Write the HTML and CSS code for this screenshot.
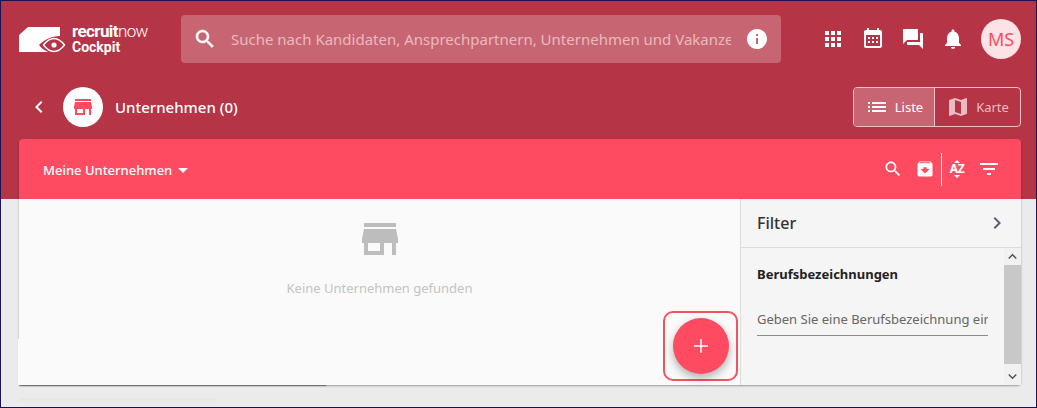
FILE: index.html
```html
<!DOCTYPE html>
<html lang="de">
<head>
    <meta charset="UTF-8">
    <title>Unternehmen</title>
    <link rel="stylesheet" href="styles.css">
</head>
<body>
<div class="frame">

    <header class="topbar">
        <div class="logo">
            <svg class="logoMark" width="47" height="26" viewBox="0 0 47 26">
                <path fill="#fff" d="M0 8 L9 0 H41 V9 C32 9 25 13 20 18 C22 21 25 23 29 25 H0 Z"/>
                <path fill="none" stroke="#fff" stroke-width="1.400" d="M24.500 18 C28 13.500 31.500 11.500 35 11.500 C38.500 11.500 42 13.500 45.500 18 C42 22.500 38.500 24.500 35 24.500 C31.500 24.500 28 22.500 24.500 18 Z"/>
                <circle cx="35" cy="18" r="2.600" fill="#fff"/>
            </svg>
            <div class="logoText">
                <div class="logoName"><b>recruit</b>now</div>
                <div class="logoSub">Cockpit</div>
            </div>
        </div>

        <div class="searchBox">
            <svg class="searchIcon" width="24" height="24" viewBox="0 0 24 24"><path d="M15.500 14h-.79l-.28-.27C15.410 12.590 16 11.110 16 9.500 16 5.910 13.090 3 9.500 3S3 5.910 3 9.500 5.910 16 9.500 16c1.610 0 3.090-.59 4.230-1.570l.27.28v.79l5 4.990L20.490 19l-4.990-5zm-6 0C7.010 14 5 11.990 5 9.500S7.010 5 9.500 5 14 7.010 14 9.500 11.990 14 9.500 14z"/></svg>
            <span class="searchText">Suche nach Kandidaten, Ansprechpartnern, Unternehmen und Vakanzen</span>
            <svg class="infoIcon" width="24" height="24" viewBox="0 0 24 24"><path d="M12 2C6.480 2 2 6.480 2 12s4.480 10 10 10 10-4.480 10-10S17.520 2 12 2zm1 15h-2v-6h2v6zm0-8h-2V7h2v2z"/></svg>
        </div>

        <nav class="topIcons">
            <svg width="24" height="24" viewBox="0 0 24 24"><path d="M4 8h4V4H4v4zm6 12h4v-4h-4v4zm-6 0h4v-4H4v4zm0-6h4v-4H4v4zm6 0h4v-4h-4v4zm6-10v4h4V4h-4zm-6 4h4V4h-4v4zm6 6h4v-4h-4v4zm0 6h4v-4h-4v4z"/></svg>
            <svg width="24" height="24" viewBox="0 0 24 24"><path d="M19 3h-1V1h-2v2H8V1H6v2H5c-1.110 0-1.990.9-1.990 2L3 19c0 1.100.89 2 2 2h14c1.100 0 2-.9 2-2V5c0-1.100-.9-2-2-2zm0 16H5V8h14v11z"/><path d="M7 10h2v2H7zM11 10h2v2h-2zM15 10h2v2h-2zM7 14h2v2H7zM11 14h2v2h-2zM15 14h2v2h-2z"/></svg>
            <svg width="24" height="24" viewBox="0 0 24 24"><path d="M21 6h-2v9H6v2c0 .55.45 1 1 1h11l4 4V7c0-.55-.45-1-1-1zm-4 6V3c0-.55-.45-1-1-1H3c-.55 0-1 .45-1 1v14l4-4h10c.55 0 1-.45 1-1z"/></svg>
            <svg width="24" height="24" viewBox="0 0 24 24"><path d="M12 22c1.100 0 2-.9 2-2h-4c0 1.100.9 2 2 2zm6-6v-5c0-3.070-1.630-5.640-4.500-6.320V4c0-.83-.67-1.500-1.500-1.500s-1.500.67-1.500 1.500v.68C7.640 5.360 6 7.920 6 11v5l-2 2v1h16v-1l-2-2z"/></svg>
        </nav>
        <div class="avatar">MS</div>
    </header>

    <div class="subbar">
        <svg class="backIcon" width="24" height="24" viewBox="0 0 24 24"><path d="M15.410 7.410L14 6l-6 6 6 6 1.410-1.410L10.830 12z"/></svg>
        <div class="pageBadge">
            <svg width="24" height="24" viewBox="0 0 24 24"><path d="M20 4H4v2h16V4zm1 10v-2l-1-5H4l-1 5v2h1v6h10v-6h4v6h2v-6h1zm-9 4H6v-4h6v4z"/></svg>
        </div>
        <h1 class="pageTitle">Unternehmen (0)</h1>
        <div class="viewToggle">
            <div class="viewBtn viewBtnActive">
                <svg width="24" height="24" viewBox="0 0 24 24"><path d="M3 13h2v-2H3v2zm0 4h2v-2H3v2zm0-8h2V7H3v2zm4 4h14v-2H7v2zm0 4h14v-2H7v2zM7 7v2h14V7H7z"/></svg>
                Liste
            </div>
            <div class="viewBtn">
                <svg width="24" height="24" viewBox="0 0 24 24"><path d="M20.500 3l-.16.03L15 5.100 9 3 3.360 4.900c-.21.07-.36.25-.36.48V20.500c0 .28.22.5.5.5l.16-.03L9 18.900l6 2.100 5.640-1.900c.21-.07.36-.25.36-.48V3.500c0-.28-.22-.5-.5-.5zM15 19l-6-2.110V5l6 2.110V19z"/></svg>
                Karte
            </div>
        </div>
    </div>

    <main class="card">
        <div class="toolbar">
            <div class="listPicker">Meine Unternehmen <span class="caret"></span></div>
            <div class="toolIcons">
                <svg width="20" height="20" viewBox="0 0 24 24"><path d="M15.500 14h-.79l-.28-.27C15.410 12.590 16 11.110 16 9.500 16 5.910 13.090 3 9.500 3S3 5.910 3 9.500 5.910 16 9.500 16c1.610 0 3.090-.59 4.230-1.570l.27.28v.79l5 4.990L20.490 19l-4.990-5zm-6 0C7.010 14 5 11.990 5 9.500S7.010 5 9.500 5 14 7.010 14 9.500 11.990 14 9.500 14z"/></svg>
                <svg width="20" height="20" viewBox="0 0 24 24"><path d="M20.540 5.230l-1.390-1.680C18.880 3.210 18.470 3 18 3H6c-.47 0-.88.21-1.160.55L3.460 5.230C3.170 5.570 3 6.020 3 6.500V19c0 1.100.9 2 2 2h14c1.100 0 2-.9 2-2V6.500c0-.48-.17-.93-.46-1.270zM12 17.500L6.500 12H10v-2h4v2h3.500L12 17.500zM5.120 5l.81-1h12l.94 1H5.120z"/></svg>
                <span class="toolDivider"></span>
                <span class="sortIcon">AZ</span>
                <svg width="24" height="24" viewBox="0 0 24 24"><path d="M10 18h4v-2h-4v2zM3 6v2h18V6H3zm3 7h12v-2H6v2z"/></svg>
            </div>
        </div>

        <div class="cardBody">
            <section class="results">
                <svg class="emptyIcon" width="48" height="48" viewBox="0 0 24 24"><path d="M20 4H4v2h16V4zm1 10v-2l-1-5H4l-1 5v2h1v6h10v-6h4v6h2v-6h1zm-9 4H6v-4h6v4z"/></svg>
                <p class="emptyText">Keine Unternehmen gefunden</p>
                <div class="fabMark">
                    <div class="fab">
                        <svg width="24" height="24" viewBox="0 0 24 24"><path d="M19 12.750h-6.250V19h-1.500v-6.250H5v-1.500h6.250V5h1.500v6.250H19z"/></svg>
                    </div>
                </div>
            </section>

            <aside class="filter">
                <div class="filterHead">
                    Filter
                    <svg width="24" height="24" viewBox="0 0 24 24"><path d="M10 6L8.590 7.410 13.170 12l-4.580 4.590L10 18l6-6z"/></svg>
                </div>
                <div class="filterBody">
                    <div class="filterMain">
                        <h2 class="filterTitle">Berufsbezeichnungen</h2>
                        <div class="filterInput"><span>Geben Sie eine Berufsbezeichnung ein</span></div>
                    </div>
                    <div class="scrollbar">
                        <svg width="17" height="17" viewBox="0 0 24 24"><path d="M12 8l-6 6 1.410 1.410L12 10.830l4.590 4.580L18 14z"/></svg>
                        <div class="scrollThumb"></div>
                        <svg width="17" height="17" viewBox="0 0 24 24"><path d="M16.590 8.590L12 13.170 7.410 8.590 6 10l6 6 6-6z"/></svg>
                    </div>
                </div>
            </aside>
        </div>
        <div class="ghostStrip"></div>
        <div class="ghostShadow"></div>
    </main>
</div>
</body>
</html>
```

FILE: styles.css
```css
html, body {
    margin: 0;
    height: 100%;
    overflow: hidden;
}
body {
    font-family: "Noto Sans", sans-serif;
    color: #333;
}
svg {
    display: block;
    fill: currentColor;
    flex: none;
}
.frame {
    box-sizing: border-box;
    width: 1037px;
    height: 408px;
    border: 1px solid #1a1254;
    background: linear-gradient(#b53446 198px, #ebebeb 198px);
}

/* top bar */
.topbar {
    display: flex;
    align-items: center;
    height: 76px;
    padding: 0 15px 0 18px;
}
.logo {
    display: flex;
    align-items: center;
    width: 162px;
    color: #fff;
}
.logoMark {
    margin-top: 2px;
}
.logoText {
    margin-left: 6px;
}
.logoName {
    font-family: Roboto, sans-serif;
    font-size: 17px;
    font-weight: 300;
    line-height: 16px;
    letter-spacing: -0.6px;
}
.logoName b {
    font-weight: 700;
}
.logoSub {
    font-family: Roboto, sans-serif;
    font-size: 14px;
    font-weight: 700;
    line-height: 16px;
}
.searchBox {
    display: flex;
    align-items: center;
    box-sizing: border-box;
    width: 600px;
    height: 48px;
    padding: 0 12px;
    border-radius: 4px;
    background: #c76672;
    color: #fff;
}
.searchIcon {
    stroke: #fff;
    stroke-width: .5;
}
.searchText {
    width: 500px;
    margin: 0 14px;
    overflow: hidden;
    white-space: nowrap;
    font-size: 15px;
    color: #eab9bf;
}
.topIcons {
    display: flex;
    gap: 16px;
    margin-left: 40px;
    color: #fff;
}
.avatar {
    display: flex;
    align-items: center;
    justify-content: center;
    width: 40px;
    height: 40px;
    margin-left: 16px;
    border-radius: 50%;
    background: #fde3e6;
    color: #ff4b62;
    font-size: 18px;
}

/* page title row */
.subbar {
    display: flex;
    align-items: center;
    height: 40px;
    margin-top: 10px;
    padding: 0 15px 0 26px;
    color: #fff;
}
.pageBadge {
    display: flex;
    align-items: center;
    justify-content: center;
    width: 40px;
    height: 40px;
    margin-left: 12px;
    border-radius: 50%;
    background: #fff;
    color: #ff4b62;
}
.pageTitle {
    margin: 0 0 0 12px;
    font-size: 15px;
    font-weight: 500;
}
.viewToggle {
    display: flex;
    box-sizing: border-box;
    width: 168px;
    height: 40px;
    margin-left: auto;
    border: 1px solid #e6c3c8;
    border-radius: 4px;
    overflow: hidden;
    font-size: 13px;
}
.viewBtn {
    flex: 1;
    display: flex;
    align-items: center;
    justify-content: center;
    gap: 6px;
    color: #e9bcc2;
}
.viewBtnActive {
    flex: none;
    width: 80px;
    border-right: 1px solid #e6c3c8;
    background: #c76672;
    color: #fff;
}

/* card */
.card {
    position: relative;
    width: 1002px;
    margin: 12px 0 0 18px;
    border-radius: 4px;
    box-shadow: 0 1px 2px rgba(0, 0, 0, .35);
}
.toolbar {
    display: flex;
    align-items: center;
    justify-content: space-between;
    height: 60px;
    padding: 0 20px 0 24px;
    border-radius: 4px 4px 0 0;
    background: #ff4b62;
    color: #fff;
}
.listPicker {
    display: flex;
    align-items: center;
    margin-top: 2px;
    font-size: 13px;
    font-weight: 500;
}
.caret {
    margin-left: 6px;
    border: 5px solid transparent;
    border-top-color: #fff;
    border-bottom: 0;
}
.toolIcons {
    display: flex;
    align-items: center;
    gap: 12px;
}
.toolDivider {
    width: 1px;
    height: 33px;
    margin: 0 -1px 0 -6px;
    background: #fff;
}
.sortIcon {
    position: relative;
    width: 20px;
    margin-left: -6px;
    margin-right: -2px;
    font-size: 12px;
    line-height: 12px;
    font-weight: 700;
    text-align: center;
    letter-spacing: -0.5px;
}
.sortIcon::before, .sortIcon::after {
    content: "";
    position: absolute;
    left: 7px;
    border: 3px solid transparent;
}
.sortIcon::before {
    top: -3px;
    border-bottom-color: #fff;
    border-top: 0;
}
.sortIcon::after {
    bottom: -3px;
    border-top-color: #fff;
    border-bottom: 0;
}
.cardBody {
    display: flex;
    height: 186px;
}
.results {
    position: relative;
    flex: 1;
    display: flex;
    flex-direction: column;
    align-items: center;
    padding-top: 16px;
    box-sizing: border-box;
    background: #fafafa;
}
.emptyIcon {
    color: #bdbdbd;
}
.emptyText {
    margin: 16px 0 0;
    font-size: 13px;
    color: #c4c4c4;
}
.fabMark {
    position: absolute;
    left: 644px;
    top: 112px;
    display: flex;
    align-items: center;
    justify-content: center;
    box-sizing: border-box;
    width: 75px;
    height: 70px;
    border: 2px solid #f0545f;
    border-radius: 10px;
}
.fab {
    display: flex;
    align-items: center;
    justify-content: center;
    width: 56px;
    height: 56px;
    border-radius: 50%;
    background: #ff4b62;
    color: #fff;
    box-shadow: 0 4px 8px rgba(0, 0, 0, .3);
}

/* filter panel */
.filter {
    display: flex;
    flex-direction: column;
    width: 281px;
    box-sizing: border-box;
    border-left: 1px solid #dcdcdc;
    background: #f5f5f5;
}
.filterHead {
    display: flex;
    align-items: center;
    justify-content: space-between;
    height: 49px;
    flex: none;
    box-sizing: border-box;
    padding: 0 12px 0 16px;
    border-bottom: 1px solid #dcdcdc;
    font-size: 16px;
    font-weight: 500;
    color: #333;
}
.filterHead svg {
    color: #546478;
}
.filterBody {
    flex: 1;
    display: flex;
    min-height: 0;
}
.filterMain {
    flex: 1;
    padding: 0 16px;
    min-width: 0;
}
.filterTitle {
    margin: 17px 0 0;
    font-size: 13px;
    font-weight: 700;
    color: #222;
}
.filterInput {
    margin-top: 27px;
    padding-bottom: 7px;
    border-bottom: 1px solid #8c8c8c;
    overflow: hidden;
    white-space: nowrap;
    font-size: 13px;
    color: #666;
}
.scrollbar {
    display: flex;
    flex-direction: column;
    width: 17px;
    background: #f1f1f1;
    color: #505050;
}
.scrollThumb {
    flex: 1;
    margin-bottom: 4px;
    background: #c8c8c8;
}
.ghostStrip {
    position: absolute;
    left: -1px;
    top: 200px;
    width: 309px;
    height: 46px;
    background: #fafafa;
    box-shadow: 0 2px 1px -1px rgba(0, 0, 0, .35);
}
.ghostShadow {
    position: absolute;
    left: -1px;
    top: 252px;
    width: 200px;
    height: 7px;
    background: #ebebeb;
    box-shadow: 0 3px 5px -2px rgba(0, 0, 0, .06);
}
```
